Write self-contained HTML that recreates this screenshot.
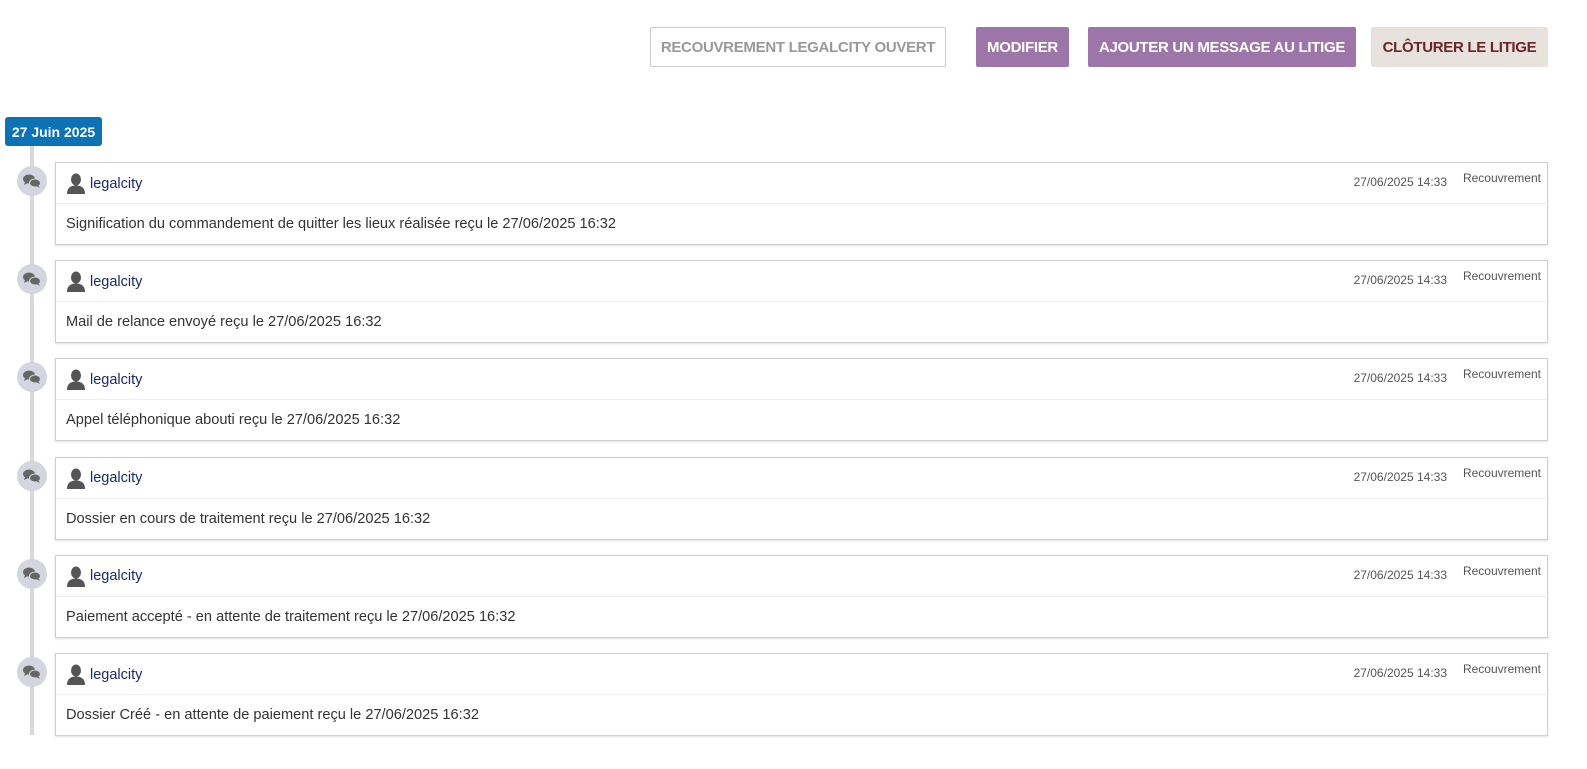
<!DOCTYPE html>
<html><head><meta charset="utf-8"><style>
body{margin:0;background:#fff;font-family:"Liberation Sans",Arial,sans-serif;width:1587px;height:769px;position:relative;overflow:hidden}
.btn{position:absolute;top:27px;height:40px;box-sizing:border-box;display:flex;align-items:center;justify-content:center;font-size:15px;font-weight:bold;border-radius:2px;letter-spacing:-0.3px;white-space:nowrap}
.date{position:absolute;left:5px;top:117px;width:97px;height:29px;background:#0b72b5;color:#fff;font-weight:bold;font-size:14px;border-radius:3px;display:flex;align-items:center;justify-content:center}
.line{position:absolute;left:30px;top:146px;width:4px;height:589px;background:#d9d9d9}
.dot{position:absolute;left:17px;width:30px;height:30px;border-radius:50%;background:#d3d6de}
.card{position:absolute;left:55px;width:1493px;height:83px;box-sizing:border-box;border:1px solid #cfcfcf;box-shadow:0 1px 2px rgba(0,0,0,.12);background:#fff}
.hd{height:40px;border-bottom:1px solid #eee;position:relative}
.user{position:absolute;left:10px;top:10px;display:flex;align-items:center;font-size:14.5px;color:#1a2a6c}
.user svg{margin-right:4px}
.time{position:absolute;right:100px;top:12px;font-size:12px;color:#555}
.cat{position:absolute;right:6px;top:8px;font-size:12px;color:#555}
.bd{padding:12px 0 0 10px;font-size:14.6px;color:#333}
</style></head><body>
<div class="btn" style="left:650px;width:296px;border:1px solid #ccc;color:#999">RECOUVREMENT LEGALCITY OUVERT</div>
<div class="btn" style="left:976px;width:93px;background:#9c75a9;color:#fff">MODIFIER</div>
<div class="btn" style="left:1088px;width:268px;background:#9c75a9;color:#fff">AJOUTER UN MESSAGE AU LITIGE</div>
<div class="btn" style="left:1371px;width:177px;background:#e8e2de;color:#6b2424">CLÔTURER LE LITIGE</div>
<div class="date">27 Juin 2025</div>
<div class="line"></div>
<script>
var msgs=["Signification du commandement de quitter les lieux réalisée reçu le 27/06/2025 16:32","Mail de relance envoyé reçu le 27/06/2025 16:32","Appel téléphonique abouti reçu le 27/06/2025 16:32","Dossier en cours de traitement reçu le 27/06/2025 16:32","Paiement accepté - en attente de traitement reçu le 27/06/2025 16:32","Dossier Créé - en attente de paiement reçu le 27/06/2025 16:32"];
var h="";
msgs.forEach(function(m,i){var t=162+i*98.2;
h+='<div class="dot" style="top:'+(t+4)+'px"><svg width="30" height="30" viewBox="0 0 30 30"><ellipse cx="12" cy="13" rx="6" ry="4.5" fill="#666"/><path d="M8 16 L7 19 L11 17Z" fill="#666"/><ellipse cx="18" cy="17" rx="5.5" ry="4" fill="#666" stroke="#d3d6de" stroke-width="1"/><path d="M21 19 L23 22 L19 20Z" fill="#666"/></svg></div>';
h+='<div class="card" style="top:'+t+'px"><div class="hd"><div class="user"><svg width="20" height="21" viewBox="0 0 20 21"><ellipse cx="10" cy="6.5" rx="5" ry="6" fill="#555"/><path d="M1 21 Q1 12.5 10 12.5 Q19 12.5 19 21Z" fill="#555"/></svg>legalcity</div><div class="time">27/06/2025 14:33</div><div class="cat">Recouvrement</div></div><div class="bd">'+m+'</div></div>';});
document.write(h);
</script>
</body></html>
